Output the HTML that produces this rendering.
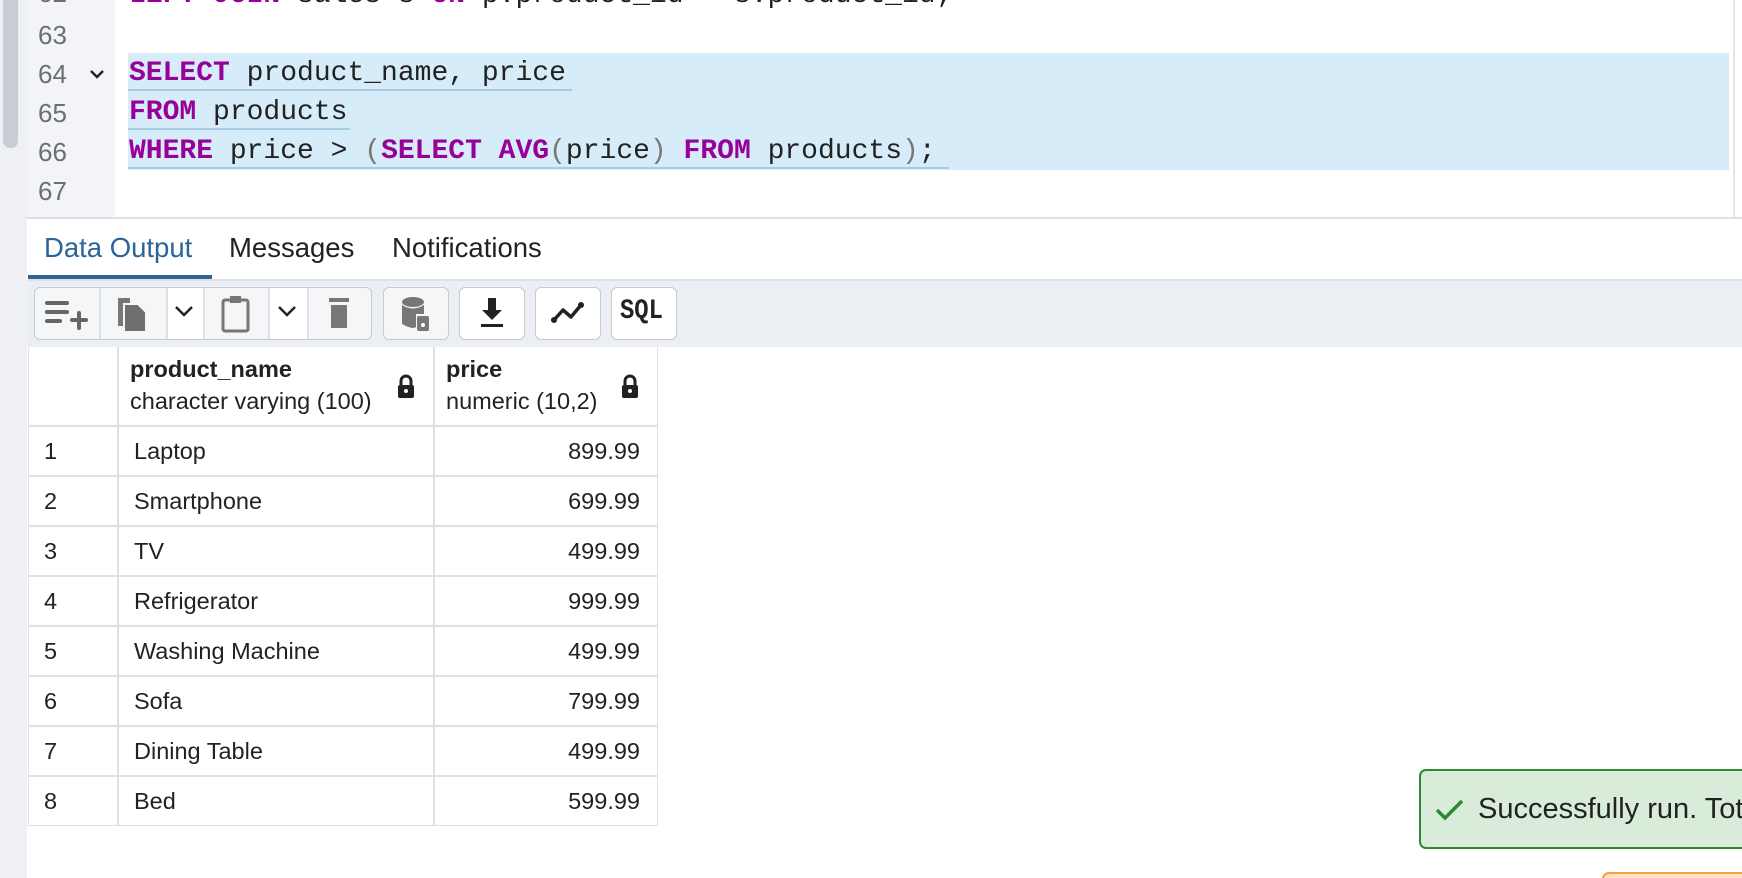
<!DOCTYPE html>
<html><head><meta charset="utf-8"><style>
*{margin:0;padding:0;box-sizing:border-box}
html,body{width:1742px;height:878px;overflow:hidden}
body{background:#fff;font-family:"Liberation Sans",sans-serif;position:relative}
#wrap{position:absolute;left:0;top:0;width:1742px;height:878px;overflow:hidden}
.abs{position:absolute}
.ln{position:absolute;left:38px;font-size:26px;color:#6b6f75;font-family:"Liberation Sans",sans-serif}
.code{position:absolute;left:129px;font-family:"Liberation Mono",monospace;font-size:28px;color:#222;white-space:pre;line-height:39px}
.k{color:#990099;font-weight:bold}
.p{color:#777}
.btn{position:absolute;top:287px;height:53px;border:1.5px solid #c5c9d0;border-radius:6px;background:#f5f6f8}
.w{background:#fff}
.cell{position:absolute;font-size:23.5px;color:#222}
.hl{position:absolute;background:#dde1e6}
</style></head><body><div id="wrap">
<div class="abs" style="left:0;top:0;width:27px;height:878px;background:#eef0f3"></div>
<div class="abs" style="left:3px;top:0;width:15px;height:148px;background:#c9ccd2;border-radius:0 0 7px 7px"></div>
<div class="abs" style="left:27px;top:0;width:88px;height:217px;background:#f3f4f8"></div>
<div class="abs" style="left:128px;top:53px;width:1601px;height:117px;background:#d6ecf9"></div>
<div class="abs" style="left:1733px;top:0;width:2px;height:217px;background:#e4e6ea"></div>
<div class="ln" style="top:-22px">62</div>
<div class="ln" style="top:20px">63</div>
<div class="ln" style="top:59px">64</div>
<div class="ln" style="top:98px">65</div>
<div class="ln" style="top:137px">66</div>
<div class="ln" style="top:176px">67</div>
<svg class="abs" style="left:88px;top:67px" width="20" height="14"><path d="M3 4 L9 10 L15 4" stroke="#222" stroke-width="2.5" fill="none"/></svg>
<div class="code" style="top:-24px"><span class="k">LEFT JOIN</span> sales s <span class="k">ON</span> p.product_id = s.product_id;</div>
<div class="code" style="top:54px"><span class="k">SELECT</span> product_name, price</div>
<div class="code" style="top:93px"><span class="k">FROM</span> products</div>
<div class="code" style="top:132px"><span class="k">WHERE</span> price &gt; <span class="p">(</span><span class="k">SELECT AVG</span><span class="p">(</span>price<span class="p">)</span> <span class="k">FROM</span> products<span class="p">)</span>;</div>
<div class="abs" style="left:128px;top:89px;width:444px;height:2px;background:#a8cde3"></div>
<div class="abs" style="left:128px;top:128px;width:222px;height:2px;background:#a8cde3"></div>
<div class="abs" style="left:128px;top:167px;width:821px;height:2px;background:#a8cde3"></div>
<div class="abs" style="left:27px;top:217px;width:1715px;height:2px;background:#dde0e5"></div>
<div class="abs" style="left:44px;top:232px;font-size:27.5px;color:#2b6497">Data Output</div>
<div class="abs" style="left:229px;top:232px;font-size:27.5px;color:#222">Messages</div>
<div class="abs" style="left:392px;top:232px;font-size:27.5px;color:#222">Notifications</div>
<div class="abs" style="left:28px;top:275px;width:184px;height:4px;background:#326597"></div>
<div class="abs" style="left:27px;top:279px;width:1715px;height:68px;background:#ebeef3;border-top:2px solid #dde0e5"></div>
<div class="btn" style="left:34px;width:338px"></div>
<div class="abs" style="left:166px;top:288px;width:37px;height:51px;background:#fff"></div>
<div class="abs" style="left:268px;top:288px;width:39px;height:51px;background:#fff"></div>
<div class="hl" style="left:99px;top:288px;width:1.5px;height:51px"></div>
<div class="hl" style="left:166px;top:288px;width:1.5px;height:51px"></div>
<div class="hl" style="left:203px;top:288px;width:1.5px;height:51px"></div>
<div class="hl" style="left:268px;top:288px;width:1.5px;height:51px"></div>
<div class="hl" style="left:307px;top:288px;width:1.5px;height:51px"></div>
<svg class="abs" style="left:44px;top:298px" width="44" height="34"><g stroke="#666" stroke-width="4" stroke-linecap="round"><path d="M3 5H23M3 14H23M3 23H16M28 22H42M35 15V30"/></g></svg>
<svg class="abs" style="left:114px;top:294px" width="36" height="40"><path d="M4 4H16V32H4Z" fill="#777"/><path d="M10 10H24L32 18V38H10Z" fill="#6e6e6e" stroke="#f5f6f8" stroke-width="2"/></svg>
<svg class="abs" style="left:173px;top:304px" width="22" height="14"><path d="M3 3L11 11L19 3" stroke="#222" stroke-width="2.5" fill="none"/></svg>
<svg class="abs" style="left:220px;top:294px" width="32" height="40"><rect x="3" y="6" width="25" height="31" rx="2" fill="none" stroke="#777" stroke-width="3"/><rect x="10" y="2" width="11" height="7" fill="#777"/></svg>
<svg class="abs" style="left:276px;top:304px" width="22" height="14"><path d="M3 3L11 11L19 3" stroke="#222" stroke-width="2.5" fill="none"/></svg>
<svg class="abs" style="left:326px;top:296px" width="28" height="36"><rect x="3" y="2" width="20" height="4" fill="#777"/><path d="M5 9H21V32H5Z" fill="#777"/></svg>
<div class="btn" style="left:383px;width:66px"></div>
<svg class="abs" style="left:400px;top:296px" width="32" height="38"><ellipse cx="13" cy="6" rx="11" ry="5" fill="#777"/><path d="M2 9V28Q13 34 16 31V18H24V9Q13 16 2 9Z" fill="#777"/><rect x="17" y="20" width="12" height="15" rx="2" fill="#777"/><circle cx="23" cy="29" r="2" fill="#fff"/></svg>
<div class="btn w" style="left:459px;width:66px"></div>
<svg class="abs" style="left:478px;top:296px" width="28" height="34"><path d="M10 2H18V14H24L14 24L4 14H10Z" fill="#222"/><rect x="3" y="28" width="22" height="3" fill="#222"/></svg>
<div class="btn w" style="left:535px;width:66px"></div>
<svg class="abs" style="left:550px;top:300px" width="36" height="28"><path d="M4 20L13 10L21 17L31 5" stroke="#222" stroke-width="3.5" fill="none" stroke-linejoin="round"/><circle cx="4" cy="20" r="3" fill="#222"/><circle cx="31" cy="5" r="3" fill="#222"/></svg>
<div class="btn w" style="left:611px;width:66px"></div>
<div class="abs" style="left:620px;top:296px;font-family:'Liberation Mono',monospace;font-weight:bold;font-size:28px;color:#222;transform:scaleX(0.85);transform-origin:left">SQL</div>
<div class="abs" style="left:28px;top:347px;width:630px;height:479px;border:1.5px solid #dde0e5;border-top:none"></div>
<div class="hl" style="left:117px;top:347px;width:2px;height:479px"></div>
<div class="hl" style="left:433px;top:347px;width:1.5px;height:479px"></div>
<div class="hl" style="left:28px;top:425px;width:630px;height:2px"></div>
<div class="hl" style="left:28px;top:475px;width:630px;height:1.5px"></div>
<div class="hl" style="left:28px;top:525px;width:630px;height:1.5px"></div>
<div class="hl" style="left:28px;top:575px;width:630px;height:1.5px"></div>
<div class="hl" style="left:28px;top:625px;width:630px;height:1.5px"></div>
<div class="hl" style="left:28px;top:675px;width:630px;height:1.5px"></div>
<div class="hl" style="left:28px;top:725px;width:630px;height:1.5px"></div>
<div class="hl" style="left:28px;top:775px;width:630px;height:1.5px"></div>
<div class="cell" style="left:130px;top:356px;font-weight:bold">product_name</div>
<div class="cell" style="left:130px;top:388px">character varying (100)</div>
<div class="cell" style="left:446px;top:356px;font-weight:bold">price</div>
<div class="cell" style="left:446px;top:388px">numeric (10,2)</div>
<svg class="abs" style="left:396px;top:374px" width="20" height="26"><path d="M5 11V7A5 5 0 0 1 15 7V11" stroke="#222" stroke-width="3" fill="none"/><rect x="2" y="11" width="16" height="13" rx="2" fill="#222"/><circle cx="10" cy="17" r="2" fill="#fff"/></svg>
<svg class="abs" style="left:620px;top:374px" width="20" height="26"><path d="M5 11V7A5 5 0 0 1 15 7V11" stroke="#222" stroke-width="3" fill="none"/><rect x="2" y="11" width="16" height="13" rx="2" fill="#222"/><circle cx="10" cy="17" r="2" fill="#fff"/></svg>
<div class="cell" style="left:44px;top:438px">1</div><div class="cell" style="left:134px;top:438px">Laptop</div><div class="cell" style="left:433px;width:207px;text-align:right;top:438px">899.99</div>
<div class="cell" style="left:44px;top:488px">2</div><div class="cell" style="left:134px;top:488px">Smartphone</div><div class="cell" style="left:433px;width:207px;text-align:right;top:488px">699.99</div>
<div class="cell" style="left:44px;top:538px">3</div><div class="cell" style="left:134px;top:538px">TV</div><div class="cell" style="left:433px;width:207px;text-align:right;top:538px">499.99</div>
<div class="cell" style="left:44px;top:588px">4</div><div class="cell" style="left:134px;top:588px">Refrigerator</div><div class="cell" style="left:433px;width:207px;text-align:right;top:588px">999.99</div>
<div class="cell" style="left:44px;top:638px">5</div><div class="cell" style="left:134px;top:638px">Washing Machine</div><div class="cell" style="left:433px;width:207px;text-align:right;top:638px">499.99</div>
<div class="cell" style="left:44px;top:688px">6</div><div class="cell" style="left:134px;top:688px">Sofa</div><div class="cell" style="left:433px;width:207px;text-align:right;top:688px">799.99</div>
<div class="cell" style="left:44px;top:738px">7</div><div class="cell" style="left:134px;top:738px">Dining Table</div><div class="cell" style="left:433px;width:207px;text-align:right;top:738px">499.99</div>
<div class="cell" style="left:44px;top:788px">8</div><div class="cell" style="left:134px;top:788px">Bed</div><div class="cell" style="left:433px;width:207px;text-align:right;top:788px">599.99</div>
<div class="abs" style="left:1419px;top:769px;width:323px;height:80px;overflow:hidden">
<div class="abs" style="left:0;top:0;width:360px;height:80px;background:#d9ecda;border:2px solid #2c8a32;border-radius:7px"></div>
<svg class="abs" style="left:15px;top:29px" width="32" height="24"><path d="M3 12L11 20L28 3" stroke="#2c8a32" stroke-width="3.5" fill="none"/></svg>
<div class="abs" style="left:59px;top:24px;font-size:29px;color:#222;white-space:nowrap">Successfully run. Total</div>
</div>
<div class="abs" style="left:1602px;top:872px;width:140px;height:6px;overflow:hidden"><div style="width:200px;height:20px;background:#fbe3c4;border:2px solid #f0a040;border-radius:7px"></div></div>
</div></body></html>
